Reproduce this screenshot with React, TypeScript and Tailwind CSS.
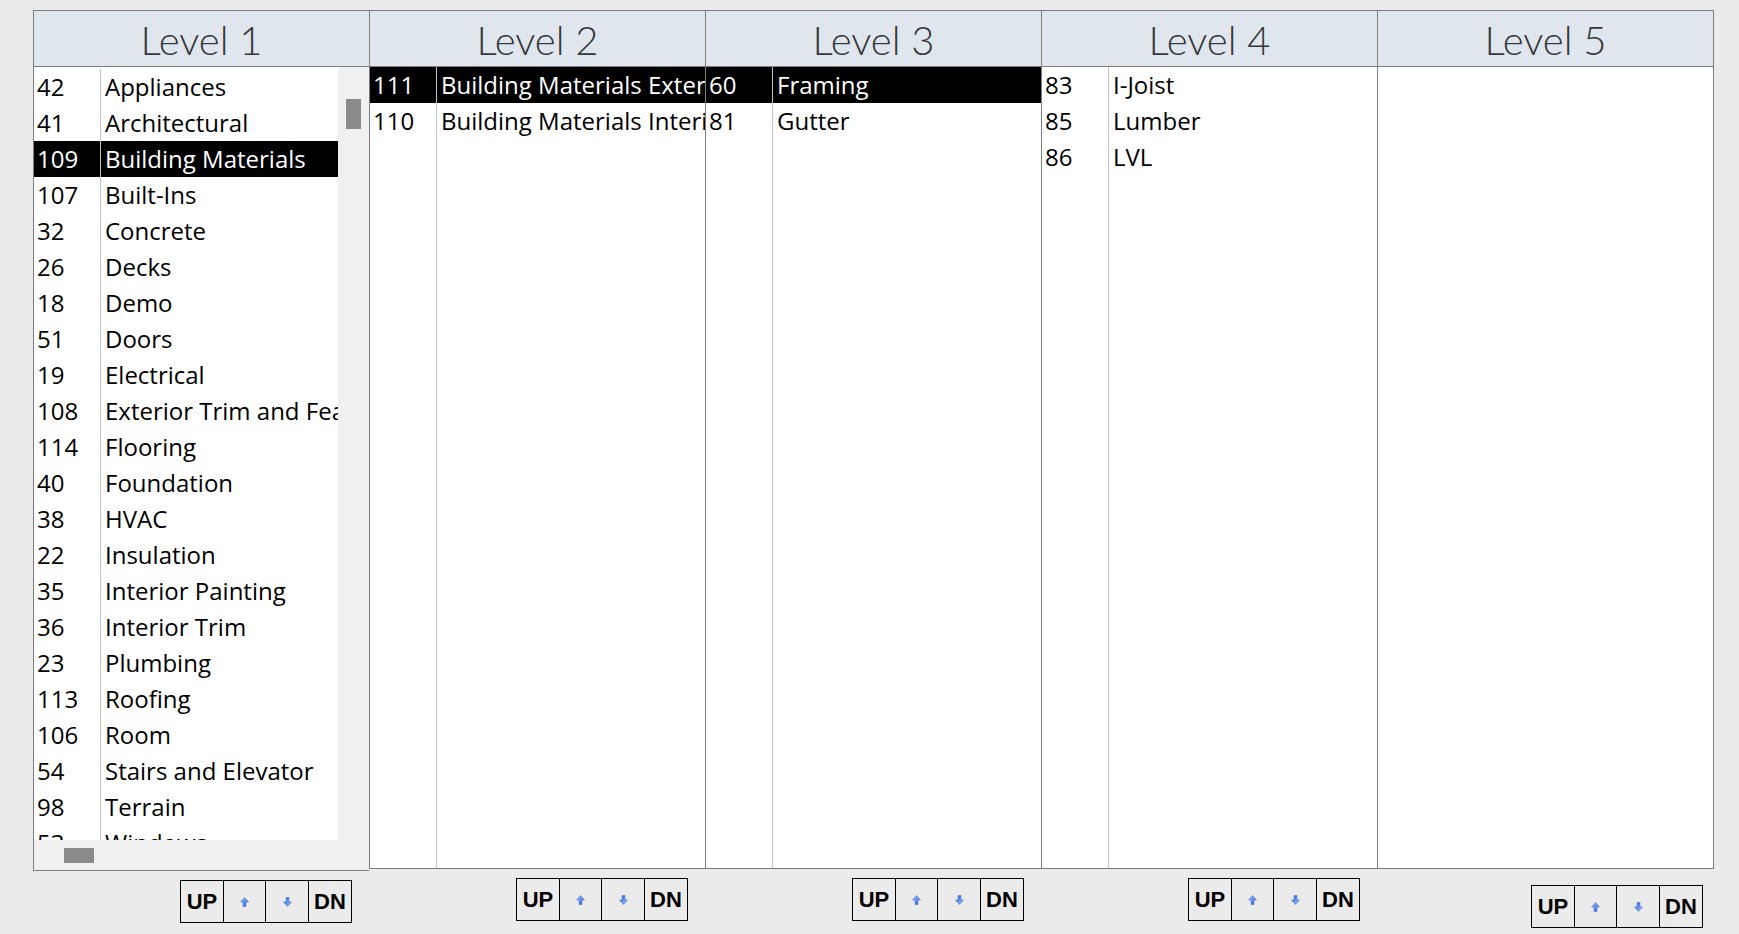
import React from 'react';

type Row = [string, string, boolean?];

const L1: Row[] = [
  ['42', 'Appliances'],
  ['41', 'Architectural'],
  ['109', 'Building Materials', true],
  ['107', 'Built-Ins'],
  ['32', 'Concrete'],
  ['26', 'Decks'],
  ['18', 'Demo'],
  ['51', 'Doors'],
  ['19', 'Electrical'],
  ['108', 'Exterior Trim and Features'],
  ['114', 'Flooring'],
  ['40', 'Foundation'],
  ['38', 'HVAC'],
  ['22', 'Insulation'],
  ['35', 'Interior Painting'],
  ['36', 'Interior Trim'],
  ['23', 'Plumbing'],
  ['113', 'Roofing'],
  ['106', 'Room'],
  ['54', 'Stairs and Elevator'],
  ['98', 'Terrain'],
  ['53', 'Windows'],
];
const L2: Row[] = [
  ['111', 'Building Materials Exterior', true],
  ['110', 'Building Materials Interior'],
];
const L3: Row[] = [
  ['60', 'Framing', true],
  ['81', 'Gutter'],
];
const L4: Row[] = [
  ['83', 'I-Joist'],
  ['85', 'Lumber'],
  ['86', 'LVL'],
];

function Arrow({ down }: { down?: boolean }) {
  return (
    <svg width="9" height="10" viewBox="0 0 9 10" className={down ? 'rotate-180' : ''}>
      <defs>
        <linearGradient id={down ? 'gd' : 'gu'} x1="0" y1="0" x2="1" y2="1">
          <stop offset="0" stopColor="#9cc2ff" />
          <stop offset="1" stopColor="#2b5fd6" />
        </linearGradient>
      </defs>
      <path d="M4.5 0.5 L8.5 5 L6 5 L6 9.5 L3 9.5 L3 5 L0.5 5 Z" fill={`url(#${down ? 'gd' : 'gu'})`} stroke="#3a6bd8" strokeWidth="0.5" />
    </svg>
  );
}

function Buttons({ extra }: { extra?: boolean }) {
  return (
    <div className={`flex border border-black w-fit ${extra ? 'ml-[154px] mt-[16px]' : 'ml-[147px] mt-[9px]'}`}>
      <div className="w-[42px] h-[41px] flex items-center justify-center font-['Liberation_Sans',Arial,sans-serif] font-bold text-[22px] text-black">UP</div>
      <div className="w-[42px] h-[41px] flex items-center justify-center border-l border-black"><Arrow /></div>
      <div className="w-[43px] h-[41px] flex items-center justify-center border-l border-black"><Arrow down /></div>
      <div className="w-[43px] h-[41px] flex items-center justify-center border-l border-black font-['Liberation_Sans',Arial,sans-serif] font-bold text-[22px] text-black">DN</div>
    </div>
  );
}

function Header({ title }: { title: string }) {
  return (
    <div className="h-[57px] border-t border-b border-[#7c7c7c] bg-[#dfe6ee] flex items-center justify-center pt-[3px]">
      <span className="font-['Lato',sans-serif] font-light text-[40px] leading-none text-[#363636]">{title}</span>
    </div>
  );
}

function Cells({ rows, divider }: { rows: Row[]; divider?: boolean }) {
  return (
    <div className="flex h-full">
      <div className={`w-[67px] shrink-0 h-full ${divider ? 'border-r border-[#c4c4c4]' : ''}`}>
        {rows.map((r, i) => (
          <div key={i} className={`h-[36px] flex items-center pl-[3px] ${r[2] ? 'bg-black text-white' : 'text-black'}`}>
            {r[0]}
          </div>
        ))}
      </div>
      <div className="flex-1 min-w-0 h-full">
        {rows.map((r, i) => (
          <div key={i} className={`h-[36px] flex items-center pl-[4px] whitespace-nowrap overflow-hidden ${r[2] ? 'bg-black text-white' : 'text-black'}`}>
            {r[1]}
          </div>
        ))}
      </div>
    </div>
  );
}

function Column({ title, rows, last, first }: { title: string; rows: Row[]; last?: boolean; first?: boolean }) {
  return (
    <div className={`flex flex-col ${last ? 'w-[337px]' : 'w-[336px]'} `}>
      <div className={`border-l border-[#7c7c7c] ${last ? 'border-r' : ''}`}>
        <Header title={title} />
      </div>
      {first ? (
        <div className="h-[804px] border-l border-b border-[#7c7c7c] flex flex-col bg-[#f0f0f0]">
          <div className="flex flex-1 min-h-0">
            <div className="w-[304px] bg-white pt-[2px] overflow-hidden">
              <Cells rows={rows} divider />
            </div>
            <div className="flex-1 pl-[8px] pt-[32px]">
              <div className="w-[15px] h-[30px] bg-[#8a8a8a]" />
            </div>
          </div>
          <div className="h-[30px] pl-[30px] pt-[8px]">
            <div className="w-[30px] h-[15px] bg-[#8a8a8a]" />
          </div>
        </div>
      ) : (
        <div className={`h-[802px] border-l border-b border-[#7c7c7c] bg-white overflow-hidden ${last ? 'border-r' : ''}`}>
          <Cells rows={rows} divider={rows.length > 0} />
        </div>
      )}
      <Buttons extra={last} />
    </div>
  );
}

export default function App() {
  return (
    <div className="w-[1739px] h-[934px] bg-[#ebebeb] overflow-hidden pt-[10px] pl-[33px] font-['Open_Sans',sans-serif] text-[24px]">
      <div className="flex items-start">
        <Column title="Level 1" rows={L1} first />
        <Column title="Level 2" rows={L2} />
        <Column title="Level 3" rows={L3} />
        <Column title="Level 4" rows={L4} />
        <Column title="Level 5" rows={[]} last />
      </div>
    </div>
  );
}
